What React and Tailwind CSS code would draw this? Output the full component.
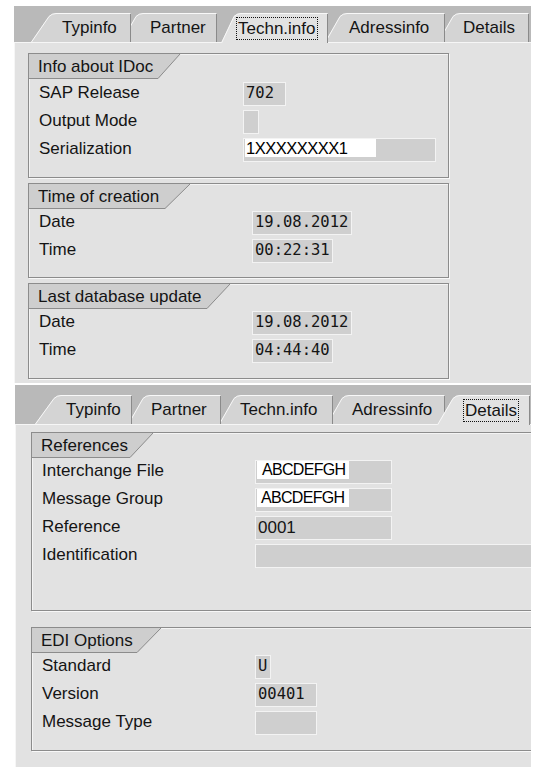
import React from "react";

const topTabs = [
  { label: "Typinfo", box: "w-[101px] ml-[17px] z-50", pl: "pl-[31px]", w: 101, s: 21 },
  { label: "Partner", box: "w-[97px] -ml-[11px] z-40", pl: "pl-[29px]", w: 97, s: 18 },
  { label: "Techn.info", box: "w-[108px] ml-[3px] z-[60]", pl: "pl-[16px]", w: 108, s: 16, active: true },
  { label: "Adressinfo", box: "w-[121px] -ml-[4px] z-20", pl: "pl-[24px]", w: 121, s: 18 },
  { label: "Details", box: "w-[92px] -ml-[8px] z-10", pl: "pl-[25px]", w: 92, s: 18 },
];

const bottomTabs = [
  { label: "Typinfo", box: "w-[98px] ml-[20px] z-50", pl: "pl-[31px]", w: 98, s: 22 },
  { label: "Partner", box: "w-[94px] -ml-[5px] z-40", pl: "pl-[23px]", w: 94, s: 18 },
  { label: "Techn.info", box: "w-[115px] -ml-[3px] z-30", pl: "pl-[21px]", w: 115, s: 18 },
  { label: "Adressinfo", box: "w-[119px] -ml-[7px] z-20", pl: "pl-[25px]", w: 119, s: 18 },
  { label: "Details", box: "w-[94px] -ml-[9px] z-[60]", pl: "pl-[27px]", w: 94, s: 19, active: true },
];

function Tab({ label, box, pl, w, s, active }) {
  const H = active ? 30 : 29;
  return (
    <div className={`relative shrink-0 ${box} ${active ? "h-[30px] -mb-px" : "h-[29px]"}`}>
      <svg className="absolute inset-0" width={w} height={H}>
        <path
          d={`M0,${H} L${s - 3},3 Q${s},0 ${s + 4},0 L${w - 1},0 L${w - 1},${H} Z`}
          fill={active ? "#e2e2e2" : "#d4d4d4"}
        />
        <path
          d={`M0.5,${H} L${s - 3},3.5 Q${s},0.5 ${s + 4},0.5 L${w - 2},0.5`}
          stroke="#f8f8f8"
          fill="none"
        />
        <path d={`M${w - 1.5},1 L${w - 1.5},${H}`} stroke="#8a8a8a" />
      </svg>
      <div className={`relative h-full flex items-center ${pl}`}>
        <span
          className={
            active
              ? "border border-dotted border-[#111] leading-[21px] px-px -ml-px"
              : "leading-[20px]"
          }
        >
          {label}
        </span>
      </div>
    </div>
  );
}

function Group({ title, wb, wt, className, rows, children }) {
  return (
    <div
      className={`border border-[#8c8c8c] shadow-[1px_1px_0_#f8f8f8,inset_1px_1px_0_#f4f4f4] ${className}`}
    >
      <div className="relative h-[25px]">
        <svg className="absolute left-0 top-0" width={wt + 1} height={25}>
          <path d={`M0,0 L${wt},0 L${wb},25 L0,25 Z`} fill="#cecece" />
          <path d={`M${wt},0 L${wb},24.5 L0,24.5`} stroke="#8c8c8c" fill="none" />
        </svg>
        <span className="relative pl-[9px] leading-[24px]">{title}</span>
      </div>
      <div className={rows}>{children}</div>
    </div>
  );
}

function Row({ label, lw, children }) {
  return (
    <div className="flex items-center h-[28px] pl-[10px]">
      <div className={`${lw} shrink-0 -mt-[3px]`}>{label}</div>
      {children}
    </div>
  );
}

function Field({ w, mono, children }) {
  return (
    <div
      className={`${w} shrink-0 h-[24px] flex items-center border border-[#f3f3f3] bg-[#cfcfcf] pl-[2px] overflow-hidden ${
        mono ? "font-['DejaVu_Sans_Mono',monospace] text-[15.5px]" : ""
      }`}
    >
      {children}
    </div>
  );
}

// white patch pasted over the original value in the screenshot
function Pasted({ w, size, children }) {
  return (
    <div className={`${w} h-[18px] -mt-[4px] -ml-px bg-white flex items-center text-black overflow-hidden ${size}`}>
      {children}
    </div>
  );
}

export default function App() {
  return (
    <div className="w-[543px] h-[778px] bg-white overflow-hidden text-[17px] text-[#141414] font-['Liberation_Sans',Arial,sans-serif]">
      {/* upper capture: Techn.info */}
      <div className="ml-[14px] mt-[6px] w-[517px] bg-[#b9b9b9]">
        <div className="flex items-end h-[36px]">
          {topTabs.map((t) => (
            <Tab key={t.label} {...t} />
          ))}
        </div>
        <div className="h-[341px] bg-[#e2e2e2] border-t border-l border-[#f6f6f6] pl-[13px] pt-[10px]">
          <Group title="Info about IDoc" wb={129} wt={151} className="w-[421px]" rows="pt-px pb-[13px]">
            <Row label="SAP Release" lw="w-[204px]">
              <Field w="w-[43px]" mono>702</Field>
            </Row>
            <Row label="Output Mode" lw="w-[204px]">
              <Field w="w-[16px]" />
            </Row>
            <Row label="Serialization" lw="w-[204px]">
              <Field w="w-[193px]">
                <Pasted w="w-[131px]" size="text-[16.5px] tracking-[-0.5px] pl-px">1XXXXXXXX1</Pasted>
              </Field>
            </Row>
          </Group>
          <Group title="Time of creation" wb={136} wt={161} className="w-[421px] mt-[5px]" rows="pb-[12px]">
            <Row label="Date" lw="w-[213px]">
              <Field w="w-[100px]" mono>19.08.2012</Field>
            </Row>
            <Row label="Time" lw="w-[213px]">
              <Field w="w-[81px]" mono>00:22:31</Field>
            </Row>
          </Group>
          <Group title="Last database update" wb={178} wt={201} className="w-[421px] mt-[5px]" rows="pb-[13px]">
            <Row label="Date" lw="w-[213px]">
              <Field w="w-[100px]" mono>19.08.2012</Field>
            </Row>
            <Row label="Time" lw="w-[213px]">
              <Field w="w-[81px]" mono>04:44:40</Field>
            </Row>
          </Group>
        </div>
      </div>

      {/* lower capture: Details */}
      <div className="ml-[15px] mt-[2px] w-[516px] bg-[#b9b9b9]">
        <div className="flex items-end h-[39px]">
          {bottomTabs.map((t) => (
            <Tab key={t.label} {...t} />
          ))}
        </div>
        <div className="h-[343px] bg-[#e2e2e2] border-t border-l border-[#f6f6f6] pl-[15px] pt-[7px] overflow-hidden">
          <Group title="References" wb={98} wt={121} className="w-[560px]" rows="pb-[40px]">
            <Row label="Interchange File" lw="w-[213px]">
              <Field w="w-[137px]">
                <Pasted w="w-[92px]" size="text-[16px] tracking-[-0.7px] pl-[5px]">ABCDEFGH</Pasted>
              </Field>
            </Row>
            <Row label="Message Group" lw="w-[213px]">
              <Field w="w-[137px]">
                <Pasted w="w-[92px]" size="text-[16px] tracking-[-0.7px] pl-[4px]">ABCDEFGH</Pasted>
              </Field>
            </Row>
            <Row label="Reference" lw="w-[213px]">
              <Field w="w-[137px]">0001</Field>
            </Row>
            <Row label="Identification" lw="w-[213px]">
              <Field w="w-[300px]" />
            </Row>
          </Group>
          <Group title="EDI Options" wb={105} wt={129} className="w-[560px] mt-[16px]" rows="pb-[13px]">
            <Row label="Standard" lw="w-[213px]">
              <Field w="w-[16px]" mono>U</Field>
            </Row>
            <Row label="Version" lw="w-[213px]">
              <Field w="w-[62px]" mono>00401</Field>
            </Row>
            <Row label="Message Type" lw="w-[213px]">
              <Field w="w-[62px]" />
            </Row>
          </Group>
        </div>
      </div>
    </div>
  );
}
